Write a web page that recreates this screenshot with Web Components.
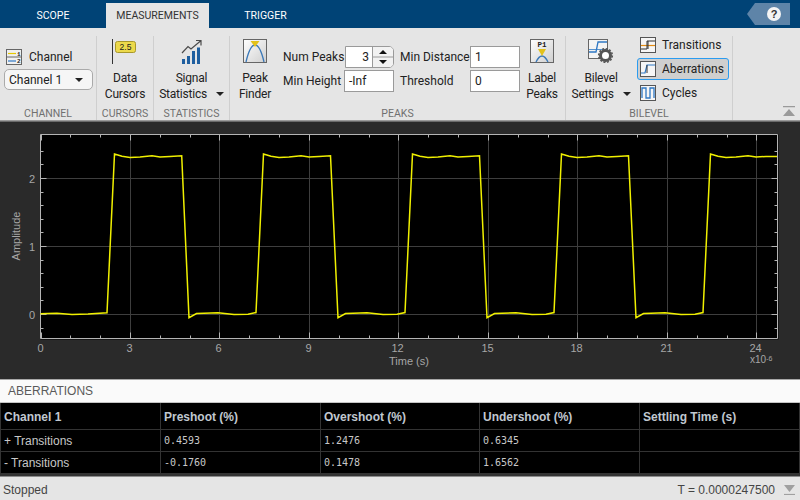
<!DOCTYPE html>
<html>
<head>
<meta charset="utf-8">
<title>Scope</title>
<style>
  html, body { margin: 0; padding: 0; background: #e5e5e5; }
  body { width: 800px; height: 500px; overflow: hidden; font-family: Roboto, "Liberation Sans", sans-serif; }
  svg { display: block; }
</style>
</head>
<body>
<tab-strip></tab-strip>
<tool-ribbon>
  <ribbon-group label="CHANNEL" style="--w:97px">
    <div style="display:flex;flex-direction:column;padding:11px 0 0 4px;gap:2px">
      <div style="display:flex;align-items:center;gap:7px;height:20px;padding-left:2px;font-size:12px;color:#222">
        <svg width="16" height="16" viewBox="0 0 16 16"><rect x=".5" y=".5" width="15" height="15" fill="#efefef" stroke="#666"/><path d="M.5 8h15" stroke="#666"/><path d="M2 4.5h8" stroke="#e6c800" stroke-width="1.2"/><path d="M2 12h8" stroke="#2f78c4" stroke-width="1.2"/><text x="11" y="6.5" font-size="6" font-family="Liberation Mono" font-weight="bold" fill="#222">1</text><text x="11" y="14" font-size="6" font-family="Liberation Mono" font-weight="bold" fill="#222">2</text></svg>
        <span>Channel</span>
      </div>
      <drop-list>Channel 1</drop-list>
    </div>
  </ribbon-group>
  <ribbon-group label="CURSORS" style="--w:57px">
    <ribbon-btn>
      <svg slot="icon" width="26" height="25" viewBox="0 0 26 25"><path d="M.5 0v25" stroke="#333"/><rect x="3.5" y="2.5" width="20" height="11" rx="2" fill="#ecd94b" stroke="#a8982a"/><text x="13.5" y="11" text-anchor="middle" font-size="8.5" font-family="Liberation Sans" fill="#222">2.5</text></svg>
      Data<br>Cursors
    </ribbon-btn>
  </ribbon-group>
  <ribbon-group label="STATISTICS" style="--w:76px">
    <ribbon-btn caret>
      <svg slot="icon" width="22" height="25" viewBox="0 0 22 25"><path d="M1 14L7 7.5 10 10 19.5 2M15 1.5h5v5" fill="none" stroke="#4a4a4a" stroke-width="1.2"/><path d="M1 20h3v5H1zM6 17h3v8H6zM11 12h3v13h-3zM16 8.500h3V25h-3z" fill="#1f5f9f"/></svg>
      Signal<br>Statistics
    </ribbon-btn>
  </ribbon-group>
  <ribbon-group label="PEAKS" style="--w:336px">
    <div style="display:flex;height:100%">
      <ribbon-btn style="--bw:50px">
        <svg slot="icon" width="24" height="24" viewBox="0 0 24 24"><defs><linearGradient id="pg" x1="0" y1="0" x2="1" y2="1"><stop offset="0" stop-color="#fff"/><stop offset="1" stop-color="#cfcfcf"/></linearGradient></defs><rect x=".5" y=".5" width="23" height="23" fill="url(#pg)" stroke="#666"/><path d="M3 23C6 10 9 6 12 6s6 4 9 17" fill="none" stroke="#3a78b8" stroke-width="1.3"/><path d="M7.500 2h9L12 8z" fill="#e3c21b"/></svg>
        Peak<br>Finder
      </ribbon-btn>
      <peak-fields></peak-fields>
      <ribbon-btn style="--bw:44px">
        <svg slot="icon" width="24" height="24" viewBox="0 0 24 24"><defs><linearGradient id="lg" x1="0" y1="0" x2="1" y2="1"><stop offset="0" stop-color="#fff"/><stop offset="1" stop-color="#cfcfcf"/></linearGradient></defs><rect x=".5" y=".5" width="23" height="23" fill="url(#lg)" stroke="#666"/><text x="12" y="8" text-anchor="middle" font-size="7.500" font-weight="bold" font-family="Liberation Mono" fill="#222">P1</text><path d="M6 23c2-4 4-6 6-6s4 2 6 6" fill="none" stroke="#3a78b8" stroke-width="1.3"/><path d="M8 10h8l-4 7z" fill="#e3c21b"/></svg>
        Label<br>Peaks
      </ribbon-btn>
    </div>
  </ribbon-group>
  <ribbon-group label="BILEVEL" style="--w:167px">
    <div style="display:flex;height:100%">
      <ribbon-btn caret style="--bw:70px">
        <svg slot="icon" width="26" height="25" viewBox="0 0 26 25"><rect x=".5" y=".5" width="19" height="19" fill="#f4f4f4" stroke="#666"/><path d="M1 13h7l2-10h9" fill="none" stroke="#2f78c4" stroke-width="1.3"/><path d="M1 10.500h18" stroke="#2f78c4" stroke-width=".8"/><circle cx="17.500" cy="16.500" r="5" fill="#fff" stroke="#555" stroke-width="3"/><circle cx="17.500" cy="16.500" r="6.800" fill="none" stroke="#555" stroke-width="1.600" stroke-dasharray="2 1.560"/></svg>
        Bilevel<br>Settings
      </ribbon-btn>
      <div style="display:flex;flex-direction:column;margin:-3px 0 0 1px">
        <small-btn>
          <svg slot="icon" width="16" height="16" viewBox="0 0 16 16"><rect x=".5" y=".5" width="15" height="15" fill="#f6f6f6" stroke="#555"/><path d="M1 8.500h14" stroke="#e38b12" stroke-width="1.200"/><path d="M1 12h6V4h1v8M8 4h7" fill="none" stroke="#333"/></svg>
          Transitions
        </small-btn>
        <small-btn selected>
          <svg slot="icon" width="16" height="16" viewBox="0 0 16 16"><rect x=".5" y=".5" width="15" height="15" fill="#f6f6f6" stroke="#555"/><path d="M1 12h4l2-8h8" fill="none" stroke="#2f78c4" stroke-width="1.200"/><path d="M7 4v8" stroke="#333"/></svg>
          Aberrations
        </small-btn>
        <small-btn>
          <svg slot="icon" width="16" height="16" viewBox="0 0 16 16"><rect x=".5" y=".5" width="15" height="15" fill="#f6f6f6" stroke="#555"/><path d="M2 13V3h4v10h4V3h4v10" fill="none" stroke="#2f78c4" stroke-width="1.300"/></svg>
          Cycles
        </small-btn>
      </div>
    </div>
  </ribbon-group>
</tool-ribbon>
<scope-plot></scope-plot>
<measure-table></measure-table>
<status-strip></status-strip>

<script>
class TabStrip extends HTMLElement {
  connectedCallback() {
    var root = this.attachShadow({ mode: "open" });
    root.innerHTML = `
      <style>
        :host { display: flex; height: 28px; background: #004376; font: 10.500px Roboto, sans-serif; color: #fff; position: relative; }
        .tab { height: 25px; margin-top: 3px; display: flex; align-items: center; justify-content: center; }
        .on { background: #e5e5e5; color: #333; }
        .help { margin: 3px 10px 0 auto; width: 43px; height: 22px; }
      </style>
      <div class="tab" style="width:106px">SCOPE</div>
      <div class="tab on" style="width:103px">MEASUREMENTS</div>
      <div class="tab" style="width:113px">TRIGGER</div>
      <svg class="help" viewBox="0 0 43 22">
        <path d="M43 0H8L0 11l8 11h35z" fill="#5e84a8"/>
        <circle cx="27" cy="11" r="7" fill="#f4f4f4"/>
        <text x="27" y="15" text-anchor="middle" font-size="11" font-weight="bold" font-family="Liberation Sans" fill="#333">?</text>
      </svg>`;
  }
}
customElements.define("tab-strip", TabStrip);

class ToolRibbon extends HTMLElement {
  connectedCallback() {
    var root = this.attachShadow({ mode: "open" });
    root.innerHTML = `
      <style>
        :host { display: flex; height: 84px; padding-top: 8px; background: #e5e5e5; position: relative; border-bottom: 1px solid #9a9a9a; }
        svg { position: absolute; right: 5px; bottom: 3px; }
      </style>
      <slot></slot>
      <svg width="12" height="11" viewBox="0 0 12 11"><path d="M0 .5h12" stroke="#9a9a9a" stroke-width="1.500"/><path d="M6 3l6 7H0z" fill="#9a9a9a"/></svg>`;
  }
}
customElements.define("tool-ribbon", ToolRibbon);

class RibbonGroup extends HTMLElement {
  connectedCallback() {
    var root = this.attachShadow({ mode: "open" });
    root.innerHTML = `
      <style>
        :host { display: flex; flex-direction: column; box-sizing: border-box; width: var(--w); height: 84px; border-right: 1px solid #cfcfcf; font: 12px Roboto, sans-serif; color: #222; }
        .body { height: 70px; }
        .label { height: 14px; line-height: 16px; text-align: center; color: #707070; font-size: 10.500px; }
      </style>
      <div class="body"><slot></slot></div>
      <div class="label">${this.getAttribute("label")}</div>`;
  }
}
customElements.define("ribbon-group", RibbonGroup);

class RibbonBtn extends HTMLElement {
  connectedCallback() {
    var root = this.attachShadow({ mode: "open" });
    var caret = this.hasAttribute("caret")
      ? '<svg class="caret" width="8" height="4" viewBox="0 0 8 4"><path d="M0 0h8L4 4z" fill="#222"/></svg>'
      : "";
    root.innerHTML = `
      <style>
        :host { display: flex; flex: none; flex-direction: column; align-items: center; box-sizing: border-box; width: var(--bw, 100%); height: 70px; padding-top: 3px; }
        .icon { height: 31px; display: flex; align-items: flex-start; }
        .text { line-height: 16px; text-align: center; letter-spacing: -.2px; }
        .caret { display: inline-block; margin-left: 6px; vertical-align: 2px; }
      </style>
      <div class="icon"><slot name="icon"></slot></div>
      <div class="text"><slot></slot>${caret}</div>`;
  }
}
customElements.define("ribbon-btn", RibbonBtn);

class SmallBtn extends HTMLElement {
  connectedCallback() {
    var root = this.attachShadow({ mode: "open" });
    root.innerHTML = `
      <style>
        :host { display: flex; align-items: center; gap: 6px; box-sizing: border-box; width: 92px; height: 22px; margin: 1px 0; padding-left: 2px; border: 1px solid transparent; border-radius: 3px; }
        :host([selected]) { background: #cfcfcf; border-color: #2b9cf0; }
      </style>
      <slot name="icon"></slot><span><slot></slot></span>`;
  }
}
customElements.define("small-btn", SmallBtn);

class DropList extends HTMLElement {
  connectedCallback() {
    var root = this.attachShadow({ mode: "open" });
    root.innerHTML = `
      <style>
        :host { display: flex; align-items: center; justify-content: space-between; box-sizing: border-box; width: 89px; height: 21px; padding: 0 9px 0 4px; background: #f6f6f6; border: 1px solid #aaa; border-radius: 5px; }
      </style>
      <span><slot></slot></span>
      <svg width="8" height="4" viewBox="0 0 8 4"><path d="M0 0h8L4 4z" fill="#222"/></svg>`;
  }
}
customElements.define("drop-list", DropList);

class PeakFields extends HTMLElement {
  connectedCallback() {
    var root = this.attachShadow({ mode: "open" });
    root.innerHTML = `
      <style>
        :host { display: grid; flex: none; grid-template-columns: 61px 50px 76px 50px; grid-auto-rows: 24px; padding: 9px 0 0 3px; }
        .l { display: flex; align-items: center; white-space: nowrap; }
        .l.b { padding-left: 6px; }
        .v { box-sizing: border-box; height: 22px; margin-top: 1px; background: #fff; border: 1px solid #9a9a9a; display: flex; align-items: center; padding: 0 4px; }
        .num { justify-content: flex-end; padding: 0; margin-left: 1px; border-radius: 0 5px 5px 0; position: relative; }
        .num span { margin-right: 24px; }
        .spin { position: absolute; right: 0; top: 0; width: 20px; height: 20px; border-left: 1px solid #9a9a9a; background: #f2f2f2; border-radius: 0 4px 4px 0; }
      </style>
      <div class="l">Num Peaks</div>
      <div class="v num"><span>3</span>
        <svg class="spin" viewBox="0 0 20 20"><path d="M0 10h20" stroke="#9a9a9a"/><path d="M6 7l4-4 4 4zM6 13h8l-4 4z" fill="#111"/></svg>
      </div>
      <div class="l b">Min Distance</div>
      <div class="v">1</div>
      <div class="l">Min Height</div>
      <div class="v">-Inf</div>
      <div class="l b">Threshold</div>
      <div class="v">0</div>`;
  }
}
customElements.define("peak-fields", PeakFields);

class ScopePlot extends HTMLElement {
  connectedCallback() {
    var root = this.attachShadow({ mode: "open" });
    var L = 40.5, R = 777.5, T = 134.5, B = 338.5;
    var X = (u) => 40.5 + u * 29.83;
    var Y = (v) => 314 - v * 68;
    var ticks = "";
    var grid = "";
    var labels = "";
    for (var i = 0; i <= 24; i++) {
      var x = Math.round(X(i)) + 0.5;
      var major = i % 3 == 0;
      ticks += `M${x} ${B}v${major ? -6 : -3}M${x} ${T}v${major ? 6 : 3}`;
      if (major) {
        if (i > 0) grid += `M${x} ${T}V${B}`;
        labels += `<text x="${x - 1}" y="352" text-anchor="middle">${i}</text>`;
      }
    }
    for (var j = -1; j <= 12; j++) {
      var y = Math.round(Y(j / 5)) + 0.5;
      var maj = j % 5 == 0;
      ticks += `M${L} ${y}h${maj ? 6 : 3}M${R} ${y}h${maj ? -6 : -3}`;
      if (maj) {
        grid += `M${L} ${y}H${R}`;
        labels += `<text x="35" y="${y + 4}" text-anchor="end">${j / 5}</text>`;
      }
    }
    // one period of the pulse, as px offsets from the period start
    var shape = [[0, 317.7], [7.5, 313.6], [15, 313.2], [29, 312.8], [45, 314.5], [59, 314.2], [67, 312.6],
      [74.5, 154], [82, 156.3], [90, 157.4], [100, 157.1], [112, 155.8], [120, 157.1], [130, 156.4], [141.5, 155.8]];
    var pts = [[40.5, 313.8], [47.5, 313.6], [57, 313.2], [72, 314.5], [88, 314], [107, 312.8]];
    pts.push([114.5, 154], [122, 156.3], [130, 157.4], [140, 157.1], [152, 155.8], [160, 157.1], [170, 156.4], [181.7, 155.8]);
    for (var p = 0; p < 4; p++) {
      shape.forEach((s) => {
        var px = 189 + p * 149 + s[0];
        if (px <= 777) pts.push([px, s[1]]);
      });
    }
    pts.push([777, 156.6]);
    var line = pts.map((a) => a.join(",")).join(" ");
    root.innerHTML = `
      <style>
        :host { display: block; height: 257px; border-top: 1px solid #6a6a6a; background: #2a2a2a; }
        svg { display: block; }
        text { font: 11px "Liberation Sans", sans-serif; fill: #a6a6a6; }
      </style>
      <svg width="800" height="257" viewBox="0 122 800 257">
        <rect x="${L}" y="${T}" width="${R - L + 1}" height="${B - T + 1}" fill="#000"/>
        <path d="${grid}" stroke="#3e3e3e" fill="none"/>
        <path d="${ticks}" stroke="#b4b4b4" fill="none"/>
        <path d="M${L} ${T}H${R}V${B}H${L}Z" stroke="#b4b4b4" fill="none"/>
        <polyline points="${line}" fill="none" stroke="#f0f000" stroke-width="1.500" stroke-linejoin="miter"/>
        ${labels}
        <text x="409" y="365" text-anchor="middle">Time (s)</text>
        <text transform="translate(20 236) rotate(-90)" text-anchor="middle">Amplitude</text>
        <text x="750" y="363" style="font-size:10px">x10<tspan dy="-2" style="font-size:7px">-6</tspan></text>
      </svg>`;
  }
}
customElements.define("scope-plot", ScopePlot);

class MeasureTable extends HTMLElement {
  connectedCallback() {
    var root = this.attachShadow({ mode: "open" });
    var rows = [
      ["+ Transitions", "0.4593", "1.2476", "0.6345", ""],
      ["- Transitions", "-0.1760", "0.1478", "1.6562", ""],
    ];
    var cells = rows
      .map((r) => r.map((c, i) => `<div class="${i ? "num" : ""}">${c}</div>`).join(""))
      .join("");
    root.innerHTML = `
      <style>
        :host { display: block; background: #fafafa; font: 12px "Liberation Sans", sans-serif; }
        .title { height: 22px; line-height: 22px; padding-left: 8px; color: #5a5a5a; border-top: 1px solid #a8a8a8; border-bottom: 1px solid #c4c4c4; }
        .grid { display: grid; grid-template-columns: 159px 159px 158px 159px 159px; grid-template-rows: 26px 21px 21px; gap: 1px; height: 71px; padding: 0 1px 2px 1px; background: #333; border-bottom: 1px solid #8c8c8c; color: #c8c8c8; }
        .grid div { background: #000; display: flex; align-items: center; padding-left: 3px; white-space: nowrap; }
        .grid .head { font-weight: bold; color: #c0c8d0; padding-top: 1px; }
        .grid .num { font: 10px "DejaVu Sans Mono", monospace; }
      </style>
      <div class="title">ABERRATIONS</div>
      <div class="grid">
        <div class="head">Channel 1</div>
        <div class="head">Preshoot (%)</div>
        <div class="head">Overshoot (%)</div>
        <div class="head">Undershoot (%)</div>
        <div class="head">Settling Time (s)</div>
        ${cells}
      </div>`;
  }
}
customElements.define("measure-table", MeasureTable);

class StatusStrip extends HTMLElement {
  connectedCallback() {
    var root = this.attachShadow({ mode: "open" });
    root.innerHTML = `
      <style>
        :host { display: flex; align-items: center; height: 23px; padding: 2px 5px 0 3px; box-sizing: border-box; background: #e5e5e5; font: 12px "Liberation Sans", sans-serif; color: #444; }
        .t { margin-left: auto; margin-right: 9px; }
      </style>
      <span>Stopped</span>
      <span class="t">T = 0.0000247500</span>
      <svg width="11" height="10" viewBox="0 0 11 10"><path d="M0 0h11L5.500 7z" fill="#a0a0a0"/><path d="M0 9.500h11" stroke="#a0a0a0" stroke-width="1.200"/></svg>`;
  }
}
customElements.define("status-strip", StatusStrip);
</script>
</body>
</html>
